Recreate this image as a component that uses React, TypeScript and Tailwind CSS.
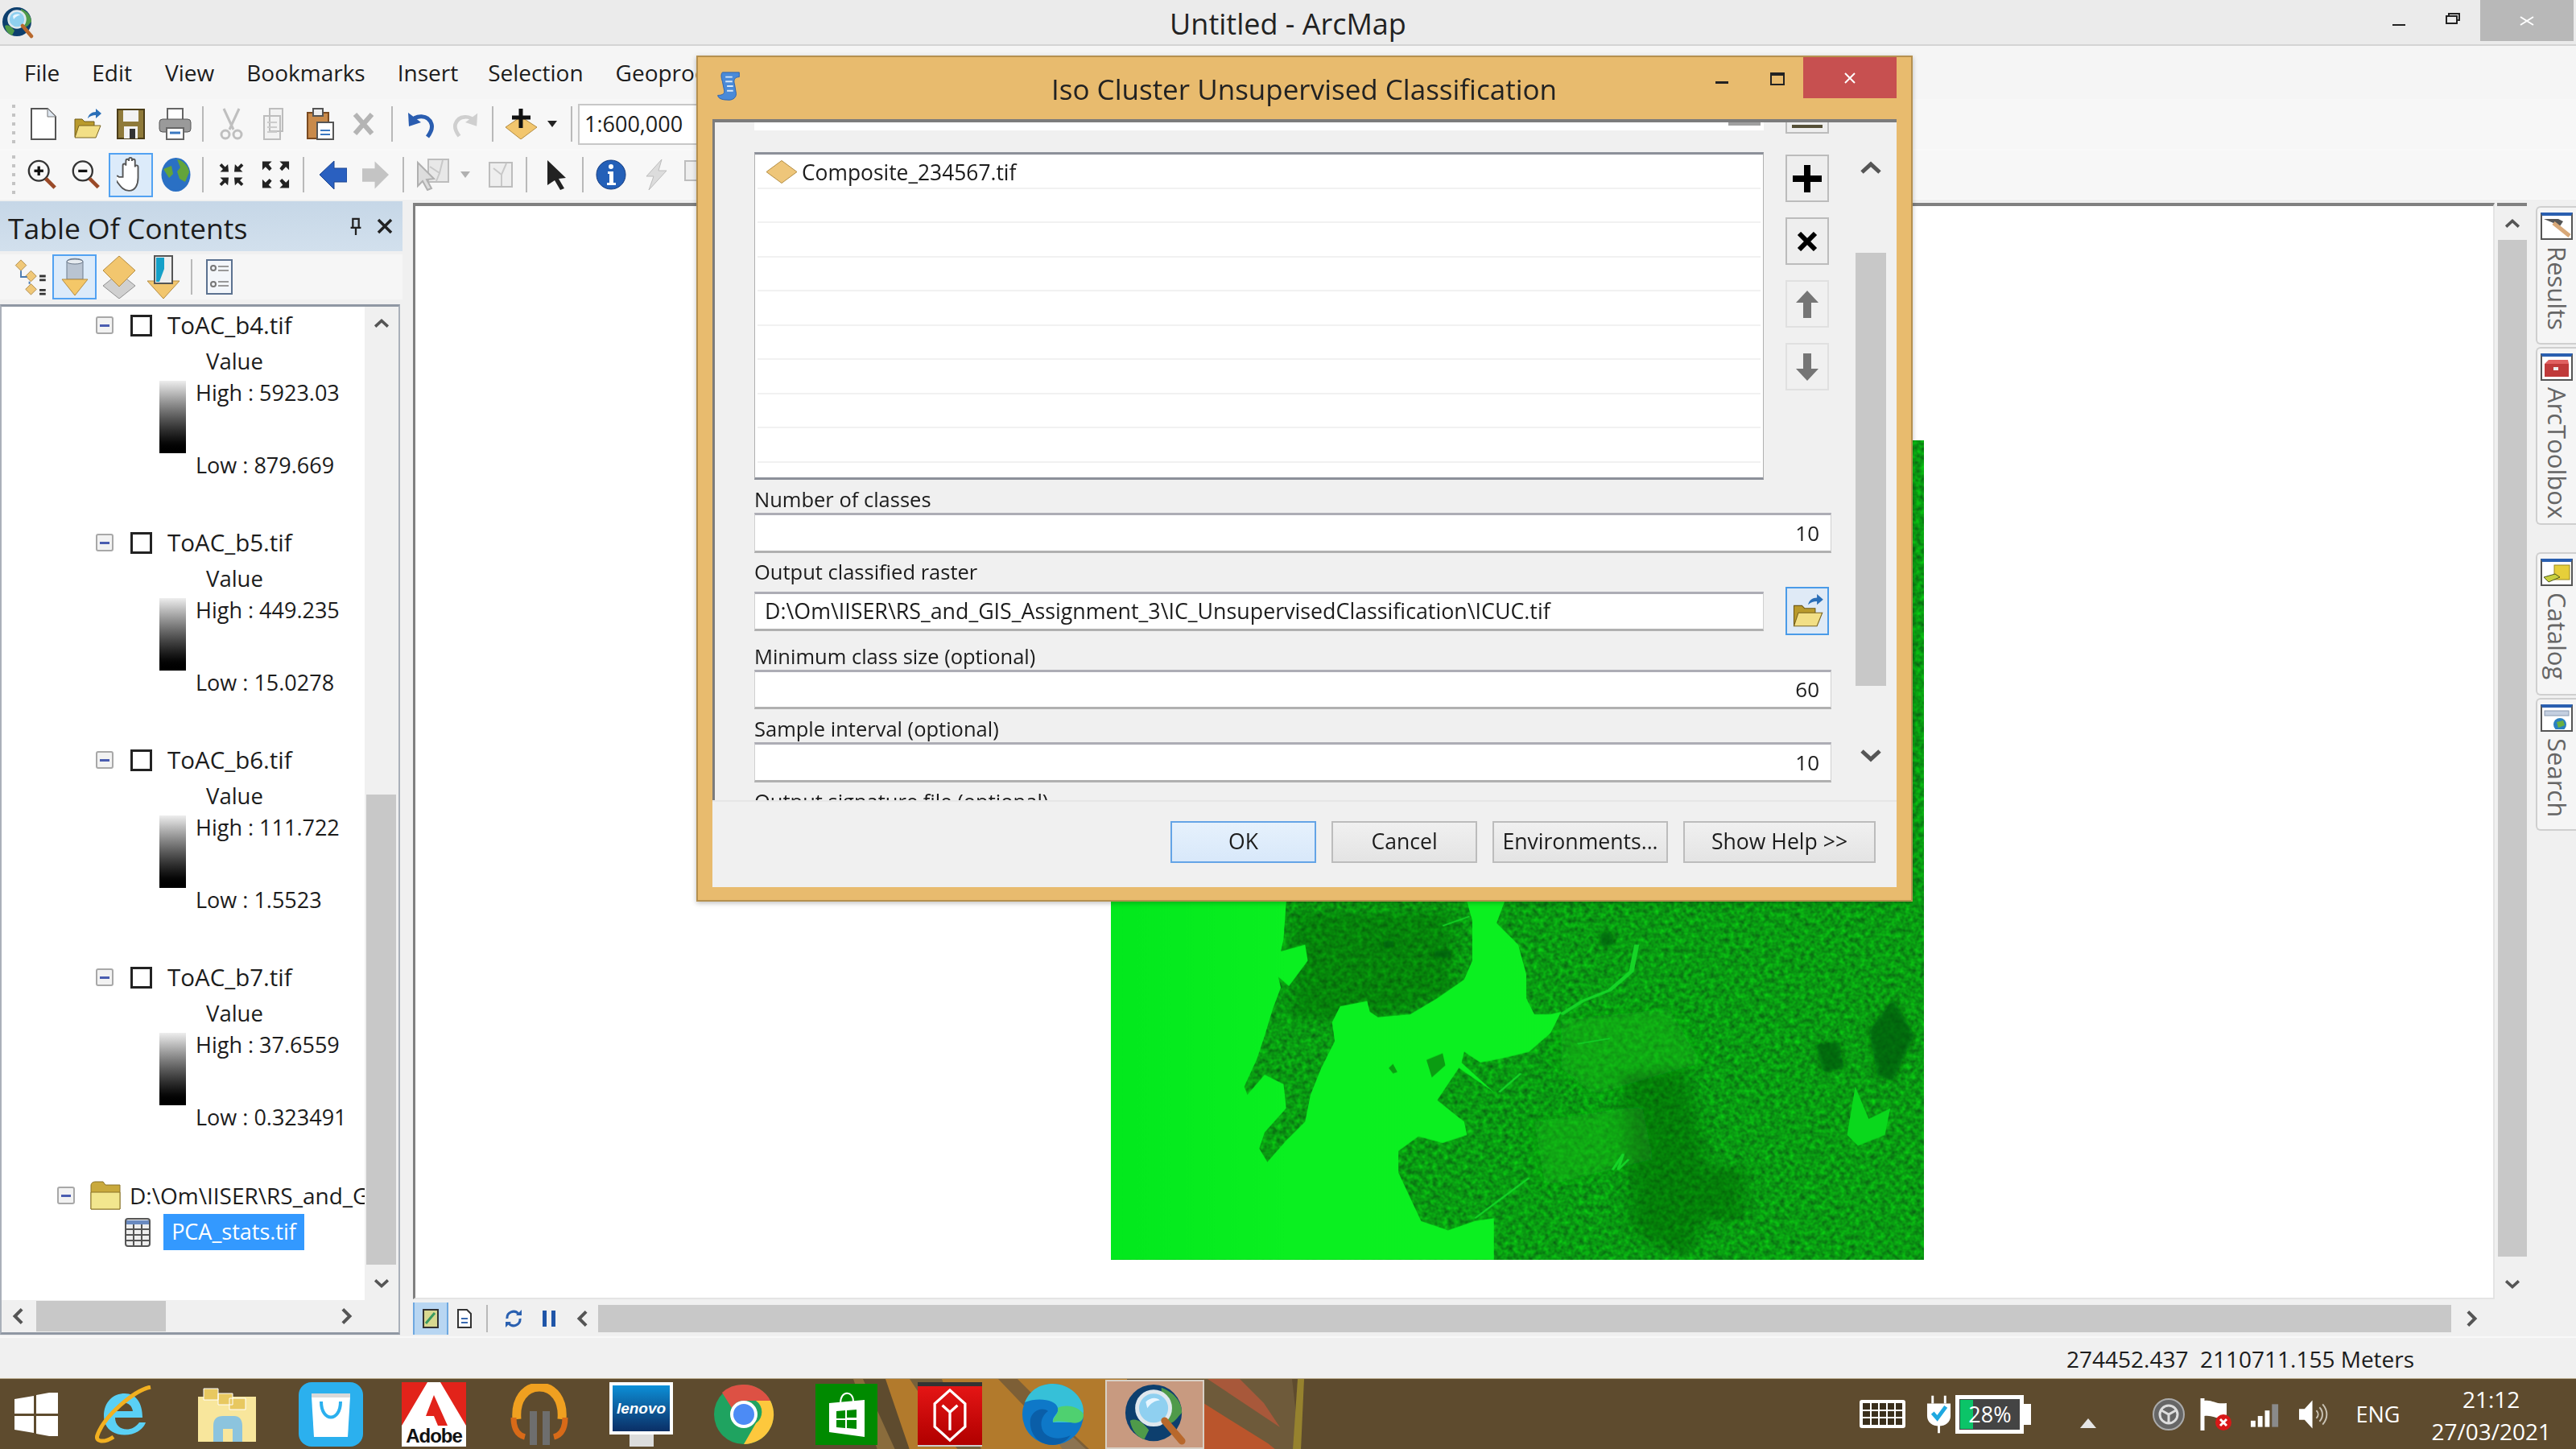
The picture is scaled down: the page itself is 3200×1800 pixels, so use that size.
import React from "react";

type SP = { className?: string; vb?: string; children?: React.ReactNode };
const S = ({ className = "", vb = "0 0 32 32", children }: SP) => (
  <svg viewBox={vb} className={"shrink-0 " + className}>{children}</svg>
);
const Sep = ({ className = "" }: { className?: string }) => <div className={"w-[2px] h-[44px] bg-[#b9b9b9] shrink-0 " + className} />;
const Handle = () => (
  <div className="flex flex-col gap-[7px] ml-[15px] w-[4px] shrink-0">
    {[0, 1, 2, 3, 4].map((i) => <div key={i} className="w-[4px] h-[4px] bg-[#c4c4c4]" />)}
  </div>
);

const ArcGlobe = ({ className = "" }: { className?: string }) => (
  <S vb="0 0 40 40" className={className}>
    <circle cx="19" cy="19" r="18" fill="#0d3f6e" />
    <path d="M24 3c8 3 13 9 13 16-3 3-5 7-9 7-1-4-3-8-4-12z M4 24c4-2 8 1 12 6l-3 6C8 34 5 30 4 24z" fill="#4f9a4a" />
    <circle cx="19" cy="16" r="10.5" fill="#8fd0f0" stroke="#dfe8ee" strokeWidth="2.5" />
    <path d="M14 12c3-3 7-3 9-1-3 0-6 2-8 5z" fill="#e8f6ff" />
    <path d="M26 24l11 13" stroke="#b8682c" strokeWidth="4.5" strokeLinecap="round" />
  </S>
);
const OpenFolder = ({ className = "" }: { className?: string }) => (
  <S vb="0 0 40 40" className={className}>
    <path d="M5 14h9l3 3h12v19H5z" fill="#b99a2c" stroke="#6f5a18" />
    <path d="M5 37l5-15h27l-6 15z" fill="#f2df86" stroke="#7a6420" />
    <path d="M21 13c1-5 5-8 10-8V1l7 6-7 6V9c-4 0-7 1-10 4z" fill="#2a6fb8" />
  </S>
);
const Mag = ({ plus }: { plus?: boolean }) => (
  <S vb="0 0 40 40" className={plus ? "w-[40px] h-[38px] ml-[13px]" : "w-[37px] h-[38px] ml-[16px]"}>
    <circle cx="16" cy="15" r="13" fill="#f7f7f7" stroke="#333" strokeWidth="2.5" />
    <path d="M10 15h12" stroke="#111" strokeWidth="3.5" />
    {plus && <path d="M16 9v12" stroke="#111" strokeWidth="3.5" />}
    <path d="M25 25l12 12" stroke="#9a4a28" strokeWidth="5" />
  </S>
);
const Arrows = ({ out, className = "" }: { out?: boolean; className?: string }) => (
  <S vb="0 0 40 40" className={className}>
    {out ? (
      <path d="M3 3h12l-4 4 4 5-3 3-5-5-4 4z M37 3H25l4 4-4 5 3 3 5-5 4 4z M3 37h12l-4-4 4-5-3-3-5 5-4-4z M37 37H25l4-4-4-5 3-3 5 5 4-4z" fill="#222" />
    ) : (
      <path d="M16 16H4l4-4-5-5 3-3 5 5 4-4z M24 16h12l-4-4 5-5-3-3-5 5-4-4z M16 24H4l4 4-5 5 3 3 5-5 4 4z M24 24h12l-4 4 5 5-3 3-5-5-4 4z" fill="#222" />
    )}
  </S>
);
const Chev = ({ dir, className = "", color = "#555" }: { dir: "u" | "d" | "l" | "r"; className?: string; color?: string }) => {
  const p = { u: "3,15 14,5 25,15", d: "3,5 14,15 25,5", l: "18,3 7,14 18,25", r: "10,3 21,14 10,25" }[dir];
  const vb = dir === "u" || dir === "d" ? "0 0 28 20" : "0 0 28 28";
  return (
    <S vb={vb} className={className}>
      <polyline points={p} fill="none" stroke={color} strokeWidth="5" />
    </S>
  );
};
const Minus = ({ className = "" }: { className?: string }) => (
  <div className={"w-[22px] h-[22px] border-2 border-[#a8a8a8] rounded-[3px] bg-[#f2f2f2] flex items-center justify-center shrink-0 " + className}>
    <div className="w-[12px] h-[3px] bg-[#4a5db0]" />
  </div>
);

const Entry = ({ name, hi, lo }: { name: string; hi: string; lo: string }) => (
  <div className="h-[270px] shrink-0">
    <div className="h-[44px] flex items-center">
      <Minus className="ml-[117px]" />
      <div className="w-[27px] h-[27px] border-[3px] border-[#222] bg-white ml-[21px] shrink-0" />
      <span className="ml-[19px] text-[29.5px] leading-none">{name}</span>
    </div>
    <div className="h-[45px] pl-[254px] flex items-center text-[27.5px]">Value</div>
    <div className="flex pl-[196px]">
      <div className="w-[33px] h-[90px] mt-[2px] bg-gradient-to-b from-[#eeeeee] to-black shrink-0" />
      <div className="ml-[12px] text-[27px] whitespace-nowrap">
        <div className="h-[34px] flex items-center">High : {hi}</div>
        <div className="h-[34px] mt-[56px] flex items-center">Low : {lo}</div>
      </div>
    </div>
  </div>
);

const TocBar = () => (
  <div className="h-[56px] mt-[4px] bg-[#f6f6f6] flex items-center">
    <S vb="0 0 44 50" className="w-[43px] h-[48px] ml-[17px]">
      <path d="M9 3l7 7-7 7-7-7z M22 17l7 7-7 7-7-7z M22 34l7 7-7 7-7-7z" fill="#f0c878" stroke="#b08a48" />
      <path d="M9 17v8h8M20 31v3" stroke="#4a7ab0" strokeWidth="2" fill="none" />
      <path d="M33 24h8M33 29h8M33 42h8M33 47h8" stroke="#333" strokeWidth="3" />
    </S>
    <div className="w-[55px] h-[56px] ml-[5px] border-2 border-[#52a2f2] bg-[#dcebfa] flex items-center justify-center shrink-0">
      <S vb="0 0 40 50" className="w-[40px] h-[50px]">
        <path d="M10 6c0-5 20-5 20 0v22H10z" fill="#b9c4d2" stroke="#6c7a8c" />
        <ellipse cx="20" cy="6" rx="10" ry="3" fill="#e6ebf0" stroke="#6c7a8c" />
        <path d="M4 28h32L20 48z" fill="#f4c768" stroke="#b48c42" />
      </S>
    </div>
    <S vb="0 0 40 54" className="w-[40px] h-[54px] ml-[8px]">
      <path d="M20 22l20 16-20 16L0 38z" fill="#d0d0d0" stroke="#909090" />
      <path d="M20 1l20 18-20 20L0 19z" fill="#f2c66e" stroke="#b48c42" />
    </S>
    <S vb="0 0 40 54" className="w-[40px] h-[54px] ml-[15px]">
      <path d="M0 32h40L20 54z" fill="#f2c66e" stroke="#b48c42" />
      <rect x="9" y="1" width="22" height="34" fill="#eee" stroke="#555" strokeWidth="2" />
      <path d="M11 3h10v14l-6 16h-4z" fill="#15a0c8" />
    </S>
    <Sep className="ml-[14px]" />
    <S vb="0 0 33 44" className="w-[33px] h-[44px] ml-[17px]">
      <rect x="1" y="1" width="31" height="42" fill="#f3f6fa" stroke="#5c7290" strokeWidth="2" />
      <circle cx="9" cy="11" r="3" fill="none" stroke="#777" strokeWidth="2" />
      <circle cx="9" cy="31" r="3" fill="none" stroke="#777" strokeWidth="2" />
      <path d="M15 9h13M15 14h13M15 28h13M15 33h13" stroke="#999" strokeWidth="2" />
    </S>
  </div>
);

const Tab = ({ label, h, mt, icon }: { label: string; h: string; mt: string; icon: React.ReactNode }) => (
  <div className={"w-[50px] border-2 border-r-0 border-[#cfcfcf] rounded-tl-[6px] rounded-bl-[6px] bg-[#f5f5f5] flex flex-col items-center pt-[6px] overflow-hidden " + h + " " + mt}>
    <div className="w-[40px] h-[34px] border-2 border-[#555] border-t-[4px] border-t-[#2a5fb0] bg-white relative shrink-0 overflow-hidden flex items-center justify-center">{icon}</div>
    <span className="[writing-mode:vertical-rl] text-[31px] leading-none text-[#666] mt-[8px] whitespace-nowrap">{label}</span>
  </div>
);

const Input = ({ value, className = "" }: { value: string; className?: string }) => (
  <div className={"h-[50px] bg-white border-t-[3px] border-b-[3px] border-x border-t-[#adadb5] border-b-[#b0b0b0] border-x-[#d0d0d0] flex items-center text-[26px] " + className}>{value}</div>
);
const Label = ({ t, mt }: { t: string; mt: string }) => <div className={"h-[30px] pb-[3px] flex items-center text-[25.5px] whitespace-nowrap " + mt}>{t}</div>;
const SideBtn = ({ dim, children }: { dim?: boolean; children: React.ReactNode }) => (
  <div className={"w-[54px] h-[59px] flex items-center justify-center border-2 " + (dim ? "border-[#e0e0e0] bg-[#f0f0f0]" : "border-[#bcbcbc] bg-[#eeeeee]")}>{children}</div>
);
const Btn = ({ t, w, ok }: { t: string; w: string; ok?: boolean }) => (
  <div className={"h-[52px] flex items-center justify-center text-[26.6px] border-2 " + w + " " + (ok ? "bg-gradient-to-b from-[#e6f1fc] to-[#d8e8fa] border-[#64a4e6]" : "bg-gradient-to-b from-[#f0f0f0] to-[#e4e4e4] border-[#bcbcbc]")}>{t}</div>
);

const WATER =
  "0,-100 340,-100 340,60 335,200 330,245 375,220 380,280 345,375 325,340 330,380 315,460 300,560 285,650 262,750 268,780 300,705 335,740 340,830 300,920 290,980 305,1030 340,950 375,880 385,780 405,680 430,580 425,510 440,450 490,430 495,470 510,490 570,480 620,420 670,350 685,280 685,130 675,60 675,-100 745,-100 745,60 730,140 770,220 785,330 785,420 800,480 830,480 850,470 830,550 790,620 740,645 700,660 670,620 665,660 725,770 660,680 620,800 670,880 675,930 630,960 585,935 548,990 548,1070 590,1250 640,1285 690,1250 725,1240 725,1395 0,1395";

const GreenMap = () => (
  <svg viewBox="0 0 1010 1018" className="w-[1010px] h-[1018px] block">
    <defs>
      <filter id="noise" x="0" y="0" width="100%" height="100%" colorInterpolationFilters="sRGB">
        <feTurbulence type="fractalNoise" baseFrequency="0.16 0.16" numOctaves="2" seed="7" />
        <feColorMatrix values="0 0 0 0 0.04  0.55 0 0 0 0.33  0 0 0 0 0.07  0 0 0 0 1" />
      </filter>
      <filter id="soft" x="-30%" y="-30%" width="160%" height="160%"><feGaussianBlur stdDeviation="16" /></filter>
      <filter id="soft3" x="-30%" y="-30%" width="160%" height="160%"><feGaussianBlur stdDeviation="5" /></filter>
      <filter id="soft2"><feGaussianBlur stdDeviation="1" /></filter>
      <linearGradient id="water" x1="0" x2="1" y1="0" y2="0">
        <stop offset="0" stopColor="#02e81d" />
        <stop offset="0.4" stopColor="#0af020" />
        <stop offset="1" stopColor="#0cf020" />
      </linearGradient>
    </defs>
    <rect width="1010" height="1018" filter="url(#noise)" />
    <g transform="translate(-10 553) scale(0.67 0.3333)">
      <g filter="url(#soft)">
        <path d="M850 500l200-40 60 200-200 120-60-100z M800 880l200-60 20 200-200 100z" fill="#14b81c" opacity="0.5" />
        <path d="M960 700l120-20 60 500-60 210-100-100z M1130 1050l60 0 0 200-60 0z" fill="#045a08" opacity="0.45" />
        <path d="M350 100l300 0 0 300-150 100-150 0z" fill="#045a08" opacity="0.35" />
      </g>
      <path d="M1420 540l45-120 40 140-40 170-30-20z M1320 590l45-10 10 100-40 20z M920 180l20-10 10 50-25 10z M520 205l20 0 0 25-20 5z M615 240l30 0 0 30-30 0z" fill="#045a08" opacity="0.75" filter="url(#soft3)" />
      <polygon points={WATER} fill="url(#water)" />
      <path d="M600 650l30-25 5 45-25 45z M530 680l8-15 8 30-8 5z" fill="#0b9c12" />
      <path d="M1395 750l25 120 40-40-10 100-50 40-20-40z" fill="#0ad81c" />
      <g fill="none" stroke="#12d428" strokeWidth="5" filter="url(#soft2)">
        <path d="M850 480l40-50 50-40 40-70 10-100" strokeWidth="9" />
        <path d="M630 150l50-35" />
        <path d="M690 1240l100-150" />
        <path d="M945 1060l20-60-10 60 20-40" />
        <path d="M880 590l60-20" />
        <path d="M735 770l40-70" />
      </g>
    </g>
  </svg>
);

const Wallpaper = () => (
  <svg viewBox="0 0 640 88" preserveAspectRatio="none" className="absolute left-[1000px] top-0 w-[640px] h-[88px]">
    <path d="M60 0h12l40 88H90z" fill="#8a6c3c" />
    <path d="M100 0h300v88H130z" fill="#b27a2c" />
    <path d="M130 0h40c10 30 30 60 50 88h-30C170 60 150 30 130 0z" fill="#76603a" />
    <path d="M240 0h24l60 60 30 28h-30z" fill="#7d5f36" />
    <path d="M270 40c40 6 60 30 80 48h-30c-10-20-30-36-50-48z" fill="#8c7350" />
    <path d="M495 0h110l10 88H495z" fill="#6e5a3a" />
    <path d="M500 0h40l30 30 20 30-30-20z" fill="#a8583a" />
    <path d="M495 30l80 50 10 8h-90z" fill="#ba552c" />
    <path d="M612 0h8l-4 88h-10z" fill="#96822e" />
  </svg>
);

export default function App() {
  return (
    <div className="relative w-[3200px] h-[1800px] overflow-hidden flex flex-col bg-[#f0f0f0] text-[#1c1c1c] blur-[0.6px] font-['Open_Sans','Noto_Sans',sans-serif]">
      {/* Title bar */}
      <div className="h-[57px] shrink-0 bg-[#ebebeb] border-b-2 border-[#d4d4d4] grid grid-cols-[1fr_auto_1fr] items-center">
        <ArcGlobe className="w-[40px] h-[40px] ml-[2px]" />
        <div className="text-[36px] leading-none text-[#222] pt-[4px]">Untitled - ArcMap</div>
        <div className="flex justify-end items-start h-full">
          <div className="w-[16px] h-[2px] bg-[#222] mt-[30px]" />
          <S vb="0 0 18 14" className="w-[18px] h-[14px] mt-[16px] ml-[50px]">
            <path d="M4 3V1h13v8h-2M1 4h13v9H1z" fill="none" stroke="#222" strokeWidth="2" />
          </S>
          <div className="w-[116px] h-[51px] ml-[25px] mr-[3px] bg-[#b8b8b8] flex items-center justify-center">
            <S vb="0 0 18 12" className="w-[18px] h-[12px]"><path d="M1 1l16 10M17 1L1 11" stroke="#fff" strokeWidth="2" /></S>
          </div>
        </div>
      </div>

      {/* Menu */}
      <div className="h-[66px] shrink-0 bg-[#f5f5f5] flex items-center text-[28px] pl-[30px] leading-none">
        <span>File</span>
        <span className="ml-[40px]">Edit</span>
        <span className="ml-[41px]">View</span>
        <span className="ml-[40px]">Bookmarks</span>
        <span className="ml-[40px]">Insert</span>
        <span className="ml-[37px]">Selection</span>
        <span className="ml-[40px]">Geoprocessing</span>
      </div>

      {/* Toolbars */}
      <div className="h-[125px] shrink-0 bg-[#f9f9f9]">
        <div className="h-[62px] flex items-center bg-[#f7f7f7]">
          <Handle />
          <S vb="0 0 33 40" className="w-[33px] h-[40px] ml-[18px]">
            <path d="M2 1h20l10 10v28H2z" fill="#fff" stroke="#555" strokeWidth="2" />
            <path d="M22 1v10h10" fill="#dfe8f2" stroke="#777" />
          </S>
          <OpenFolder className="w-[40px] h-[40px] ml-[18px]" />
          <S vb="0 0 35 38" className="w-[35px] h-[38px] ml-[17px]">
            <rect x="1" y="1" width="33" height="36" fill="#8f7a3a" stroke="#4a3c18" strokeWidth="2" />
            <rect x="8" y="2" width="19" height="14" fill="#f2f2f2" />
            <rect x="9" y="22" width="17" height="15" fill="#f2f2f2" />
            <rect x="16" y="25" width="7" height="12" fill="#333" />
          </S>
          <S vb="0 0 41 40" className="w-[41px] h-[40px] ml-[17px]">
            <path d="M11 1h19v14H11z" fill="#fff" stroke="#666" strokeWidth="2" />
            <rect x="1" y="14" width="39" height="16" rx="4" fill="#9a9a9a" stroke="#555" />
            <rect x="10" y="25" width="21" height="14" fill="#fff" stroke="#666" strokeWidth="2" />
            <path d="M14 31h13" stroke="#3a78c0" strokeWidth="3" />
          </S>
          <Sep className="ml-[13px]" />
          <S vb="0 0 35 40" className="w-[35px] h-[40px] ml-[17px]">
            <path d="M8 1l12 26M27 1L15 27" stroke="#bfbfbf" strokeWidth="3" />
            <circle cx="10" cy="33" r="5" fill="none" stroke="#bfbfbf" strokeWidth="3" />
            <circle cx="25" cy="33" r="5" fill="none" stroke="#bfbfbf" strokeWidth="3" />
          </S>
          <S vb="0 0 35 40" className="w-[35px] h-[40px] ml-[22px]">
            <path d="M8 1h16v28H8zM1 10h20v29H1z" fill="#f2f2f2" stroke="#bdbdbd" strokeWidth="2" />
            <path d="M5 18h12M5 24h12M5 30h12" stroke="#ccc" strokeWidth="2" />
          </S>
          <S vb="0 0 35 40" className="w-[35px] h-[40px] ml-[18px]">
            <rect x="2" y="6" width="26" height="32" fill="#c98a4a" stroke="#7a4a20" strokeWidth="2" />
            <rect x="9" y="1" width="12" height="9" fill="#eee" stroke="#555" strokeWidth="2" />
            <rect x="14" y="18" width="20" height="21" fill="#fff" stroke="#555" strokeWidth="2" />
            <path d="M18 28h12M18 33h12" stroke="#3a78c0" strokeWidth="2" />
          </S>
          <S vb="0 0 27 28" className="w-[27px] h-[28px] ml-[23px]"><path d="M3 2l21 24M24 2L3 26" stroke="#b4b4b4" strokeWidth="6" /></S>
          <Sep className="ml-[21px]" />
          <S vb="0 0 35 36" className="w-[35px] h-[36px] ml-[17px]">
            <path d="M5 16c6-10 22-10 26 2 2 6-2 12-5 16" fill="none" stroke="#2a5db0" strokeWidth="5" />
            <path d="M2 4l1 17 15-5z" fill="#2a5db0" />
          </S>
          <S vb="0 0 35 36" className="w-[33px] h-[36px] ml-[22px]">
            <path d="M30 16c-6-10-22-10-26 2-2 6 2 12 5 16" fill="none" stroke="#cfcfcf" strokeWidth="5" />
            <path d="M33 4l-1 17-15-5z" fill="#cfcfcf" />
          </S>
          <Sep className="ml-[16px]" />
          <S vb="0 0 41 38" className="w-[41px] h-[38px] ml-[14px]">
            <path d="M20 10l20 13-20 15L1 23z" fill="#f2c66e" stroke="#b48c42" />
            <path d="M20 0v24M9 11h23" stroke="#111" strokeWidth="5" />
          </S>
          <S vb="0 0 12 8" className="w-[12px] h-[8px] ml-[12px]"><path d="M0 0h12L6 8z" fill="#222" /></S>
          <Sep className="ml-[17px]" />
          <div className="w-[160px] h-[51px] ml-[7px] bg-white border-2 border-[#c8c8c8] flex items-center pl-[6px] text-[27px] shrink-0">1:600,000</div>
        </div>
        <div className="h-[60px] mt-[2px] flex items-center bg-[#f7f7f7]">
          <Handle />
          <Mag plus />
          <Mag />
          <div className="w-[55px] h-[55px] ml-[10px] border-2 border-[#52a2f2] bg-[#dcebfa] flex items-center justify-center shrink-0">
            <S vb="0 0 38 46" className="w-[36px] h-[46px]">
              <path d="M8 26V11c0-3 4-3 4 0V5c0-3 4-3 4 0v-2c0-3 4-3 4 0v2c0-3 4-3 4 0v8c0-3 4-3 4 0v14c0 8-3 17-12 17-8 0-11-6-18-15-2-3 2-6 5-3z" fill="#fff" stroke="#555" strokeWidth="2" />
            </S>
          </div>
          <S vb="0 0 37 44" className="w-[37px] h-[44px] ml-[10px]">
            <ellipse cx="18.5" cy="22" rx="18" ry="21" fill="#2a70c4" />
            <path d="M20 3c8 1 15 10 15 16l-5 12-7-4-3-9 4-5zM3 15l10-4 2 10-5 5z" fill="#63a43a" />
          </S>
          <Sep className="ml-[14px]" />
          <Arrows className="w-[35px] h-[40px] ml-[17px]" />
          <Arrows out className="w-[39px] h-[40px] ml-[18px]" />
          <Sep className="ml-[14px]" />
          <S vb="0 0 34 36" className="w-[34px] h-[36px] ml-[19px]"><path d="M0 18L18 1v9h16v17H18v9z" fill="#2a60c0" stroke="#1a4490" /></S>
          <S vb="0 0 34 36" className="w-[33px] h-[36px] ml-[19px]"><path d="M34 18L16 1v9H0v17h16v9z" fill="#c4c4c4" /></S>
          <Sep className="ml-[17px]" />
          <S vb="0 0 40 40" className="w-[40px] h-[40px] ml-[16px]">
            <rect x="14" y="1" width="25" height="28" fill="#e8e8e8" stroke="#bdbdbd" strokeWidth="2" />
            <path d="M16 10l12 8 4-16M28 18l-4 10" stroke="#c8c8c8" strokeWidth="2" fill="none" />
            <path d="M1 5l20 20-9 1 6 11-5 2-6-11-6 6z" fill="#ddd" stroke="#b0b0b0" strokeWidth="2" />
          </S>
          <S vb="0 0 12 8" className="w-[12px] h-[8px] ml-[14px]"><path d="M0 0h12L6 8z" fill="#b0b0b0" /></S>
          <S vb="0 0 30 32" className="w-[30px] h-[32px] ml-[23px]">
            <rect x="1" y="1" width="28" height="30" fill="#eee" stroke="#bdbdbd" strokeWidth="2" />
            <path d="M6 8l10 8 6-14M16 16v14" stroke="#c8c8c8" strokeWidth="2" fill="none" />
          </S>
          <Sep className="ml-[16px]" />
          <S vb="0 0 27 38" className="w-[27px] h-[38px] ml-[23px]"><path d="M2 1l23 22-9 1 7 12-5 2-7-12-9 6z" fill="#222" /></S>
          <Sep className="ml-[18px]" />
          <S vb="0 0 38 38" className="w-[38px] h-[38px] ml-[15px]">
            <circle cx="19" cy="19" r="18" fill="#2460b8" stroke="#153c80" />
            <circle cx="19" cy="9" r="3" fill="#fff" />
            <path d="M15 15h7v14h3v3H14v-3h3V18h-2z" fill="#fff" />
          </S>
          <S vb="0 0 32 40" className="w-[32px] h-[40px] ml-[22px]"><path d="M22 1L3 22h9L6 39l22-24h-10z" fill="#dcdcdc" stroke="#bdbdbd" /></S>
          <S vb="0 0 30 36" className="w-[30px] h-[36px] ml-[18px]"><rect x="1" y="1" width="28" height="24" fill="#eee" stroke="#bdbdbd" strokeWidth="2" /></S>
        </div>
      </div>

      {/* Middle */}
      <div className="flex-1 min-h-0 flex">
        {/* TOC */}
        <div className="w-[500px] shrink-0 flex flex-col">
          <div className="h-[62px] mt-[2px] shrink-0 bg-gradient-to-b from-[#c6d7e7] to-[#d2e0ed] flex items-center pl-[10px] pr-[12px] justify-between">
            <span className="text-[35.5px] leading-none pt-[5px] whitespace-nowrap">Table Of Contents</span>
            <div className="flex items-center">
              <S vb="0 0 16 24" className="w-[16px] h-[22px]"><path d="M4 2h8v12H4zM1 14h14M8 14v10" stroke="#222" strokeWidth="2.5" fill="none" /></S>
              <S vb="0 0 20 20" className="w-[20px] h-[20px] ml-[18px]"><path d="M2 2l16 16M18 2L2 18" stroke="#222" strokeWidth="3.5" /></S>
            </div>
          </div>
          <TocBar />
          <div className="flex-1 min-h-0 mt-[6px] mb-[2px] mr-[3px] bg-[#f0f0f0] border-t-[3px] border-b-[3px] border-x-2 border-t-[#8f97a3] border-b-[#8f97a3] border-x-[#aab0ba] flex flex-col">
            <div className="flex-1 min-h-0 flex">
              <div className="w-[451px] bg-white overflow-hidden pt-[1px] shrink-0">
                <Entry name="ToAC_b4.tif" hi="5923.03" lo="879.669" />
                <Entry name="ToAC_b5.tif" hi="449.235" lo="15.0278" />
                <Entry name="ToAC_b6.tif" hi="111.722" lo="1.5523" />
                <Entry name="ToAC_b7.tif" hi="37.6559" lo="0.323491" />
                <div className="h-[46px] flex items-center text-[28px] whitespace-nowrap">
                  <Minus className="ml-[69px]" />
                  <S vb="0 0 38 36" className="w-[38px] h-[36px] ml-[19px]">
                    <path d="M1 6c0-4 3-5 6-5h9l3 4h18v30H1z" fill="#c9a93c" stroke="#8a7226" />
                    <path d="M1 14h36v21H1z" fill="#f2e68e" stroke="#8a7226" />
                  </S>
                  <span className="ml-[11px]">D:\Om\IISER\RS_and_GIS</span>
                </div>
                <div className="h-[45px] flex items-center text-[27px]">
                  <S vb="0 0 32 36" className="w-[32px] h-[36px] ml-[153px]">
                    <rect x="1" y="1" width="30" height="34" rx="3" fill="#eee" stroke="#555" strokeWidth="2" />
                    <path d="M2 3h28v5H2z" fill="#6a8ac0" />
                    <path d="M1 14h30M1 21h30M1 28h30M11 8v27M21 8v27" stroke="#555" strokeWidth="2" />
                  </S>
                  <div className="ml-[16px] w-[175px] h-[45px] bg-[#3399ff] text-white flex items-center justify-center whitespace-nowrap">PCA_stats.tif</div>
                </div>
              </div>
              <div className="w-[41px] shrink-0 flex flex-col items-center pt-[13px] overflow-hidden">
                <Chev dir="u" className="w-[20px] h-[16px] shrink-0" />
                <div className="w-[37px] h-[584px] mt-[577px] bg-[#c8c8c8] shrink-0" />
                <Chev dir="d" className="w-[20px] h-[16px] mt-[15px] shrink-0" />
              </div>
            </div>
            <div className="h-[40px] shrink-0 flex items-center">
              <Chev dir="l" className="w-[22px] h-[22px] ml-[11px]" />
              <div className="w-[161px] h-[38px] ml-[10px] bg-[#c8c8c8]" />
              <Chev dir="r" className="w-[22px] h-[22px] ml-[212px]" />
            </div>
          </div>
        </div>

        {/* Map column */}
        <div className="w-[2642px] shrink-0 ml-[13px] flex flex-col pb-[2px]">
          <div className="flex-1 min-h-0 flex mt-[4px]">
            <div className="w-[2586px] shrink-0 bg-white border-t-4 border-l-[3px] border-t-[#808080] border-l-[#808080] border-r-2 border-r-[#e4e4e4] border-b-2 border-b-[#e4e4e4] overflow-hidden">
              <div className="ml-[864px] mt-[291px]"><GreenMap /></div>
            </div>
            <div className="w-[37px] ml-[3px] shrink-0 bg-[#f0f0f0] border-t-4 border-t-[#808080] flex flex-col items-center overflow-hidden">
              <Chev dir="u" className="w-[20px] h-[16px] mt-[14px] shrink-0" />
              <div className="w-[36px] h-[1263px] mt-[12px] bg-[#c8c8c8] shrink-0" />
              <Chev dir="d" className="w-[20px] h-[16px] mt-[26px] shrink-0" />
            </div>
          </div>
          <div className="h-[40px] mt-[4px] shrink-0 flex items-center bg-[#f0f0f0]">
            <div className="w-[44px] h-[40px] bg-[#b8d6f2] border-x-2 border-x-[#6ea8e0] flex items-center justify-center shrink-0">
              <S vb="0 0 20 24" className="w-[20px] h-[24px]">
                <rect x="1" y="1" width="18" height="22" fill="#d8d890" stroke="#333" strokeWidth="2" />
                <path d="M4 18L15 5" stroke="#3a9a60" strokeWidth="3" />
              </S>
            </div>
            <S vb="0 0 18 24" className="w-[18px] h-[24px] ml-[11px]">
              <path d="M1 1h11l5 5v17H1z" fill="#fff" stroke="#333" strokeWidth="2" />
              <path d="M5 12h8M5 17h8" stroke="#3a6ab0" strokeWidth="2" />
            </S>
            <Sep className="ml-[18px] !h-[34px]" />
            <S vb="0 0 22 24" className="w-[22px] h-[24px] ml-[21px]">
              <path d="M3 12a8 8 0 0 1 14-6M19 12a8 8 0 0 1-14 6" fill="none" stroke="#2a60b0" strokeWidth="3" />
              <path d="M14 8h7V1zM8 16H1v7z" fill="#2a60b0" />
            </S>
            <div className="w-[5px] h-[20px] bg-[#1f55a8] ml-[25px] shrink-0" />
            <div className="w-[5px] h-[20px] bg-[#1f55a8] ml-[6px] shrink-0" />
            <Chev dir="l" className="w-[22px] h-[22px] ml-[24px]" />
            <div className="w-[2302px] h-[34px] ml-[7px] bg-[#c8c8c8] shrink-0" />
            <Chev dir="r" className="w-[22px] h-[22px] ml-[13px]" />
          </div>
        </div>

        {/* Right tabs */}
        <div className="w-[50px] shrink-0 ml-[-5px] flex flex-col pt-[8px]">
          <Tab label="Results" h="h-[172px]" mt="mt-0" icon={
            <S vb="0 0 36 26" className="w-[36px] h-[26px]"><path d="M2 3h18l6 3-4 6-8-4z" fill="#555" /><path d="M14 8l20 16" stroke="#d8a878" strokeWidth="5" /></S>
          } />
          <Tab label="ArcToolbox" h="h-[221px]" mt="mt-[3px]" icon={
            <S vb="0 0 36 26" className="w-[36px] h-[26px]"><rect x="3" y="8" width="30" height="16" fill="#c03a3a" /><path d="M3 8l5-5h24l1 5z" fill="#e06060" /><rect x="14" y="12" width="6" height="4" fill="#eee" /></S>
          } />
          <Tab label="Catalog" h="h-[178px]" mt="mt-[34px]" icon={
            <S vb="0 0 36 26" className="w-[36px] h-[26px]"><rect x="15" y="3" width="19" height="18" fill="#e6cf3a" stroke="#9a8a20" /><path d="M2 18l14-4 6 4-14 6z" fill="#c8d040" stroke="#505a20" /></S>
          } />
          <Tab label="Search" h="h-[165px]" mt="mt-[3px]" icon={
            <S vb="0 0 36 26" className="w-[36px] h-[26px]"><rect x="3" y="3" width="30" height="6" fill="#c4cfe0" stroke="#8a9ab0" /><circle cx="22" cy="20" r="8" fill="#2a80c0" /><path d="M18 17l8-2 2 6-8 3z" fill="#6ab040" /></S>
          } />
        </div>
      </div>

      {/* Status bar */}
      <div className="h-[52px] shrink-0 bg-[#f0f0f0] flex items-center pl-[2567px] pt-[2px] text-[28px] whitespace-pre leading-none border-t-2 border-[#f8f8f8]">
        274452.437  2110711.155 Meters
      </div>

      {/* Taskbar */}
      <div className="h-[88px] shrink-0 bg-[#5e4b2e] border-t border-[#b8a98c] relative flex items-center overflow-hidden">
        <Wallpaper />
        <div className="relative flex items-center h-full">
          <S vb="0 0 54 54" className="w-[54px] h-[54px] ml-[18px]">
            <path d="M0 8l24-4v22H0zM27 3l27-5v28H27zM0 29h24v21L0 46zM27 29h27v27l-27-5z" fill="#fff" />
          </S>
          <S vb="0 0 78 72" className="w-[78px] h-[72px] ml-[45px]">
            <path d="M12 38c0-18 12-28 26-28 14 0 22 12 22 30H26c0 16 20 20 30 6h8c-8 22-52 22-52-8z M26 32h22c-2-14-20-14-22 0z" fill="#5ad0f5" fillRule="evenodd" />
            <path d="M70 2C50 6 12 38 4 62c-3 8 8 10 20 2" fill="none" stroke="#f2b020" strokeWidth="5" />
          </S>
          <S vb="0 0 74 72" className="w-[74px] h-[72px] ml-[50px]">
            <path d="M1 14h72v56H1z" fill="#f8e69c" />
            <path d="M8 4h18v14H8zM26 10h18v14H26zM40 16h20v14H40z" fill="#e8c860" stroke="#fff" />
            <path d="M20 70V50c0-8 4-12 12-12h14c6 0 10 4 10 12v20H44V54H32v16z" fill="#8cc4de" />
          </S>
          <div className="w-[80px] h-[80px] ml-[52px] rounded-[16px] bg-[#2bb0ee] flex items-center justify-center shrink-0">
            <S vb="0 0 52 56" className="w-[52px] h-[56px]">
              <path d="M2 6h48l-3 50H5z" fill="#fff" />
              <path d="M2 2h48v5H2z" fill="#d9d9d9" />
              <path d="M14 12c0 26 24 26 24 0" fill="none" stroke="#2bb0ee" strokeWidth="4" />
            </S>
          </div>
          <div className="w-[80px] h-[80px] ml-[48px] bg-white flex flex-col items-center shrink-0">
            <S vb="0 0 80 54" className="w-[80px] h-[54px]">
              <path d="M0 0h32L0 54zM48 0h32v54zM40 16l17 38H45l-5-12H30z" fill="#e2231a" />
            </S>
            <span className="text-[24px] leading-[26px] font-semibold text-[#111] font-['Liberation_Sans',sans-serif] tracking-[-1px]">Adobe</span>
          </div>
          <S vb="0 0 72 76" className="w-[72px] h-[76px] ml-[55px]">
            <path d="M8 44C6 20 18 4 36 4s30 16 28 40" fill="none" stroke="#f0a020" strokeWidth="11" />
            <path d="M4 42c0 16 6 22 14 24M68 42c0 16-6 22-14 24" fill="none" stroke="#d86a18" strokeWidth="7" />
            <rect x="24" y="34" width="9" height="42" fill="#6e6e6e" />
            <rect x="40" y="34" width="9" height="42" fill="#6e6e6e" />
          </S>
          <div className="w-[79px] h-[80px] ml-[51px] flex flex-col items-center shrink-0">
            <div className="w-[79px] h-[65px] bg-gradient-to-b from-[#0b90d8] to-[#0a2f66] border-[4px] border-white flex items-center justify-center">
              <span className="text-[19px] italic font-bold text-white leading-none font-['Liberation_Sans',sans-serif]">lenovo</span>
            </div>
            <div className="w-[30px] h-[15px] bg-[#dcdcdc]" />
          </div>
          <S vb="0 0 76 76" className="w-[76px] h-[76px] ml-[50px]">
            <circle cx="38" cy="38" r="37" fill="#1fa360" />
            <path d="M38 1a37 37 0 0 1 33 20H38a17 17 0 0 0-15 9L11 11A37 37 0 0 1 38 1z" fill="#dd5144" />
            <path d="M71 21a37 37 0 0 1-33 54l15-26a17 17 0 0 0 0-28z" fill="#fdc83d" />
            <circle cx="38" cy="38" r="17" fill="#fff" />
            <circle cx="38" cy="38" r="13" fill="#4c8bf5" />
          </S>
          <div className="w-[77px] h-[76px] ml-[51px] bg-[#008a00] flex items-center justify-center shrink-0">
            <S vb="0 0 48 60" className="w-[48px] h-[60px]">
              <path d="M2 16l44-4v46L2 52z" fill="#fff" />
              <path d="M16 16c0-16 16-16 16-2" fill="none" stroke="#fff" strokeWidth="2" />
              <path d="M11 26l11-1v10H11zM24 25l12-1v10H24zM11 37h11v10l-11-1zM24 37h12v11l-12-1z" fill="#008a00" />
            </S>
          </div>
          <div className="w-[80px] h-[80px] ml-[50px] bg-gradient-to-b from-[#e51515] to-[#b00000] border-t-[5px] border-t-[#333] border-b-2 border-b-[#ccc] flex items-center justify-center shrink-0">
            <S vb="0 0 48 70" className="w-[48px] h-[66px]"><path d="M24 2l20 18v30L24 68 4 50V20zM4 20M14 22l10 9 10-9M24 31v24" fill="none" stroke="#fff" strokeWidth="3.5" /></S>
          </div>
          <S vb="0 0 80 80" className="w-[80px] h-[80px] ml-[48px]">
            <circle cx="40" cy="40" r="38" fill="#0e78c8" />
            <path d="M5 25C12 8 26 2 40 2c20 0 38 16 38 34 0 10-8 14-16 14H40c-2-8 8-10 6-18-2-10-24-14-41-7z" fill="#36c0d8" />
            <path d="M78 40c0 10-8 12-16 10-8-1-16-3-22 0 0-8 8-10 6-18 12-6 28 0 32 8z" fill="#4fd070" />
            <path d="M40 78c-20 0-30-16-28-32 2-10 14-16 22-10-6 4-10 12-8 20 2 12 18 18 36 10-6 8-14 12-22 12z" fill="#0a5ea8" />
          </S>
          <div className="w-[123px] h-[86px] ml-[25px] bg-[#c89a80] border-2 border-[#d8d0c6] flex items-center justify-center shrink-0">
            <ArcGlobe className="w-[78px] h-[80px]" />
          </div>
        </div>
        <div className="relative ml-auto flex items-center h-full text-white">
          <div className="w-[57px] h-[35px] bg-white rounded-[3px] p-[4px] grid grid-cols-5 gap-[2px] shrink-0">
            {Array.from({ length: 15 }).map((_, i) => <div key={i} className="bg-[#3a2f1c]" />)}
          </div>
          <S vb="0 0 32 48" className="w-[31px] h-[48px] ml-[26px]">
            <path d="M8 0v10M24 0v10" stroke="#fff" strokeWidth="3" />
            <path d="M1 10h30v16c0 8-7 13-15 13S1 34 1 26z" fill="#fff" />
            <path d="M16 38v10" stroke="#fff" strokeWidth="3" />
            <path d="M8 22l6 7 11-15" fill="none" stroke="#1ea8e0" strokeWidth="5" />
          </S>
          <div className="ml-[5px] flex items-center shrink-0">
            <div className="w-[85px] h-[48px] border-[5px] border-white bg-[#444] relative flex items-center justify-center">
              <div className="absolute left-[1px] top-[1px] bottom-[1px] w-[16px] bg-[#0bc468]" />
              <span className="relative text-[27px] leading-none text-white">28%</span>
            </div>
            <div className="w-[9px] h-[26px] bg-white" />
          </div>
          <S vb="0 0 20 12" className="w-[20px] h-[12px] ml-[61px] mt-[22px]"><path d="M10 0l10 12H0z" fill="#e6e6e6" /></S>
          <S vb="0 0 40 40" className="w-[40px] h-[40px] ml-[70px]">
            <circle cx="20" cy="20" r="19" fill="#666" stroke="#aaa" strokeWidth="2" />
            <circle cx="20" cy="20" r="11" fill="none" stroke="#ddd" strokeWidth="3" />
            <path d="M11 15l9 5 9-5M20 20v11" stroke="#ddd" strokeWidth="3" fill="none" />
          </S>
          <S vb="0 0 40 40" className="w-[40px] h-[40px] ml-[19px]">
            <path d="M3 0v40" stroke="#fff" strokeWidth="5" />
            <path d="M5 3c10-2 14 5 28 3v18c-12 3-18-4-28-2z" fill="#fff" />
            <circle cx="29" cy="30" r="10" fill="#d81818" />
            <path d="M25 26l8 8M33 26l-8 8" stroke="#fff" strokeWidth="3" />
          </S>
          <S vb="0 0 40 30" className="w-[39px] h-[30px] ml-[22px] mt-[2px]">
            <rect x="1" y="22" width="6" height="8" fill="#fff" />
            <rect x="10" y="16" width="6" height="14" fill="#fff" />
            <rect x="19" y="9" width="6" height="21" fill="#fff" />
            <rect x="28" y="1" width="8" height="29" fill="#8a8a8a" />
          </S>
          <S vb="0 0 40 40" className="w-[39px] h-[40px] ml-[21px]">
            <path d="M1 13h7L18 2v36L8 27H1z" fill="#fff" />
            <path d="M23 15c3 3 3 7 0 10M27 11c5 5 5 13 0 18M31 7c7 8 7 18 0 26" fill="none" stroke="#c9c2b4" strokeWidth="2" />
          </S>
          <span className="text-[27px] leading-none ml-[32px]">ENG</span>
          <div className="ml-[39px] mr-[31px] flex flex-col items-center text-[28px] leading-[40px] pt-[2px]">
            <span>21:12</span>
            <span>27/03/2021</span>
          </div>
        </div>
      </div>

      {/* Dialog */}
      <div className="absolute left-[865px] top-[69px] w-[1511px] h-[1051px] bg-[#e8bb6e] border-2 border-[#b5904f] shadow-[0_2px_6px_rgba(0,0,0,0.25)] flex flex-col">
        <div className="h-[77px] shrink-0 flex items-start">
          <S vb="0 0 32 40" className="w-[32px] h-[38px] ml-[22px] mt-[17px]">
            <path d="M8 2h22v6c-6 0-8 4-6 10l2 12c0 6-6 9-12 8-6 0-12-2-12-6 6 0 10-2 8-8L8 14C6 8 6 4 8 2z" fill="#4a8ad8" stroke="#2a62b0" />
            <path d="M12 8h9M12 14h9M14 20h8M14 26h8" stroke="#d8e8f8" strokeWidth="2" />
          </S>
          <div className="flex-1 h-[77px] flex items-center justify-center text-[35px] leading-none text-[#222] ml-[-2px] mr-[-190px] pt-[2px] whitespace-nowrap">Iso Cluster Unsupervised Classification</div>
          <div className="w-[16px] h-[3px] bg-[#222] mt-[30px] shrink-0" />
          <div className="w-[18px] h-[16px] border-2 border-[#222] border-t-[4px] mt-[19px] ml-[52px] shrink-0" />
          <div className="w-[116px] h-[51px] ml-[23px] bg-[#c75050] flex items-center justify-center shrink-0">
            <S vb="0 0 16 16" className="w-[16px] h-[16px]"><path d="M2 2l12 12M14 2L2 14" stroke="#fff" strokeWidth="2" /></S>
          </div>
          <div className="w-[18px] shrink-0" />
        </div>
        <div className="h-[954px] mx-[18px] bg-[#f0f0f0] flex flex-col shrink-0">
          <div className="h-[846px] shrink-0 border-t-4 border-l-[3px] border-t-[#7c7c7c] border-l-[#7c7c7c] flex overflow-hidden">
            <div className="w-[1417px] shrink-0 pl-[49px] overflow-hidden">
              <div className="flex h-[14px] items-start">
                <div className="w-[1254px] h-[10px] bg-white flex justify-end pr-[4px]"><div className="w-[40px] h-[4px] bg-[#a0a0a0]" /></div>
                <div className="w-[54px] h-[14px] ml-[27px] border-b-2 border-x-2 border-[#bcbcbc] bg-[#eee]"><div className="mx-[6px] h-[4px] mt-[3px] bg-[#555038]" /></div>
              </div>
              <div className="flex mt-[23px] items-start">
                <div className="w-[1254px] h-[407px] bg-white border-y-[3px] border-x border-y-[#8c9099] border-x-[#b0b0b0] shrink-0 flex flex-col px-[3px]">
                  {Array.from({ length: 9 }).map((_, i) => (
                    <div key={i} className="h-[42.5px] shrink-0 border-b-2 border-[#f1f1f1] flex items-center">
                      {i === 0 && (
                        <div className="flex items-center text-[26.4px] pt-[3px]">
                          <S vb="0 0 40 30" className="w-[40px] h-[31px] ml-[10px]"><path d="M20 1l19 14-19 14L1 15z" fill="#eec67a" stroke="#b58f45" /></S>
                          <span className="ml-[5px] leading-none">Composite_234567.tif</span>
                        </div>
                      )}
                    </div>
                  ))}
                </div>
                <div className="ml-[27px] pt-[3px] flex flex-col gap-[19px]">
                  <SideBtn><S vb="0 0 36 34" className="w-[36px] h-[34px]"><path d="M14 0h8v13h14v8H22v13h-8V21H0v-8h14z" fill="#000" /></S></SideBtn>
                  <SideBtn><S vb="0 0 26 24" className="w-[26px] h-[24px]"><path d="M3 2l20 20M23 2L3 22" stroke="#000" strokeWidth="6" /></S></SideBtn>
                  <SideBtn dim><S vb="0 0 30 34" className="w-[30px] h-[36px]"><path d="M15 0l14 15h-9v19h-10V15H1z" fill="#757575" /></S></SideBtn>
                  <SideBtn dim><S vb="0 0 30 34" className="w-[30px] h-[36px]"><path d="M15 34L1 19h9V0h10v19h9z" fill="#757575" /></S></SideBtn>
                </div>
              </div>
              <Label t="Number of classes" mt="mt-[11px]" />
              <Input value="10" className="w-[1338px] justify-end pr-[14px]" />
              <Label t="Output classified raster" mt="mt-[10px]" />
              <div className="flex items-center h-[60px] mt-[2px]">
                <Input value="D:\Om\IISER\RS_and_GIS_Assignment_3\IC_UnsupervisedClassification\ICUC.tif" className="w-[1254px] pl-[12px] whitespace-nowrap !h-[49px] !text-[26.8px]" />
                <div className="w-[54px] h-[60px] ml-[27px] border-2 border-[#4a9be8] bg-[#dfeaf6] flex items-center justify-center">
                  <OpenFolder className="w-[44px] h-[46px]" />
                </div>
              </div>
              <Label t="Minimum class size (optional)" mt="mt-[13px]" />
              <Input value="60" className="w-[1338px] justify-end pr-[14px] !h-[49px]" />
              <Label t="Sample interval (optional)" mt="mt-[11px]" />
              <Input value="10" className="w-[1338px] justify-end pr-[14px]" />
              <Label t="Output signature file (optional)" mt="mt-[10px]" />
            </div>
            <div className="w-[38px] shrink-0 flex flex-col items-center">
              <Chev dir="u" className="w-[28px] h-[20px] mt-[47px] shrink-0" />
              <div className="w-[38px] h-[538px] mt-[95px] bg-[#c8c8c8] shrink-0" />
              <Chev dir="d" className="w-[28px] h-[20px] mt-[76px] shrink-0" />
            </div>
          </div>
          <div className="flex-1 border-t-2 border-[#e6e6e6] flex justify-end gap-[19px] pr-[26px] pt-[24px]">
            <Btn t="OK" w="w-[181px]" ok />
            <Btn t="Cancel" w="w-[181px]" />
            <Btn t="Environments..." w="w-[218px]" />
            <Btn t="Show Help >>" w="w-[239px]" />
          </div>
        </div>
      </div>
    </div>
  );
}
